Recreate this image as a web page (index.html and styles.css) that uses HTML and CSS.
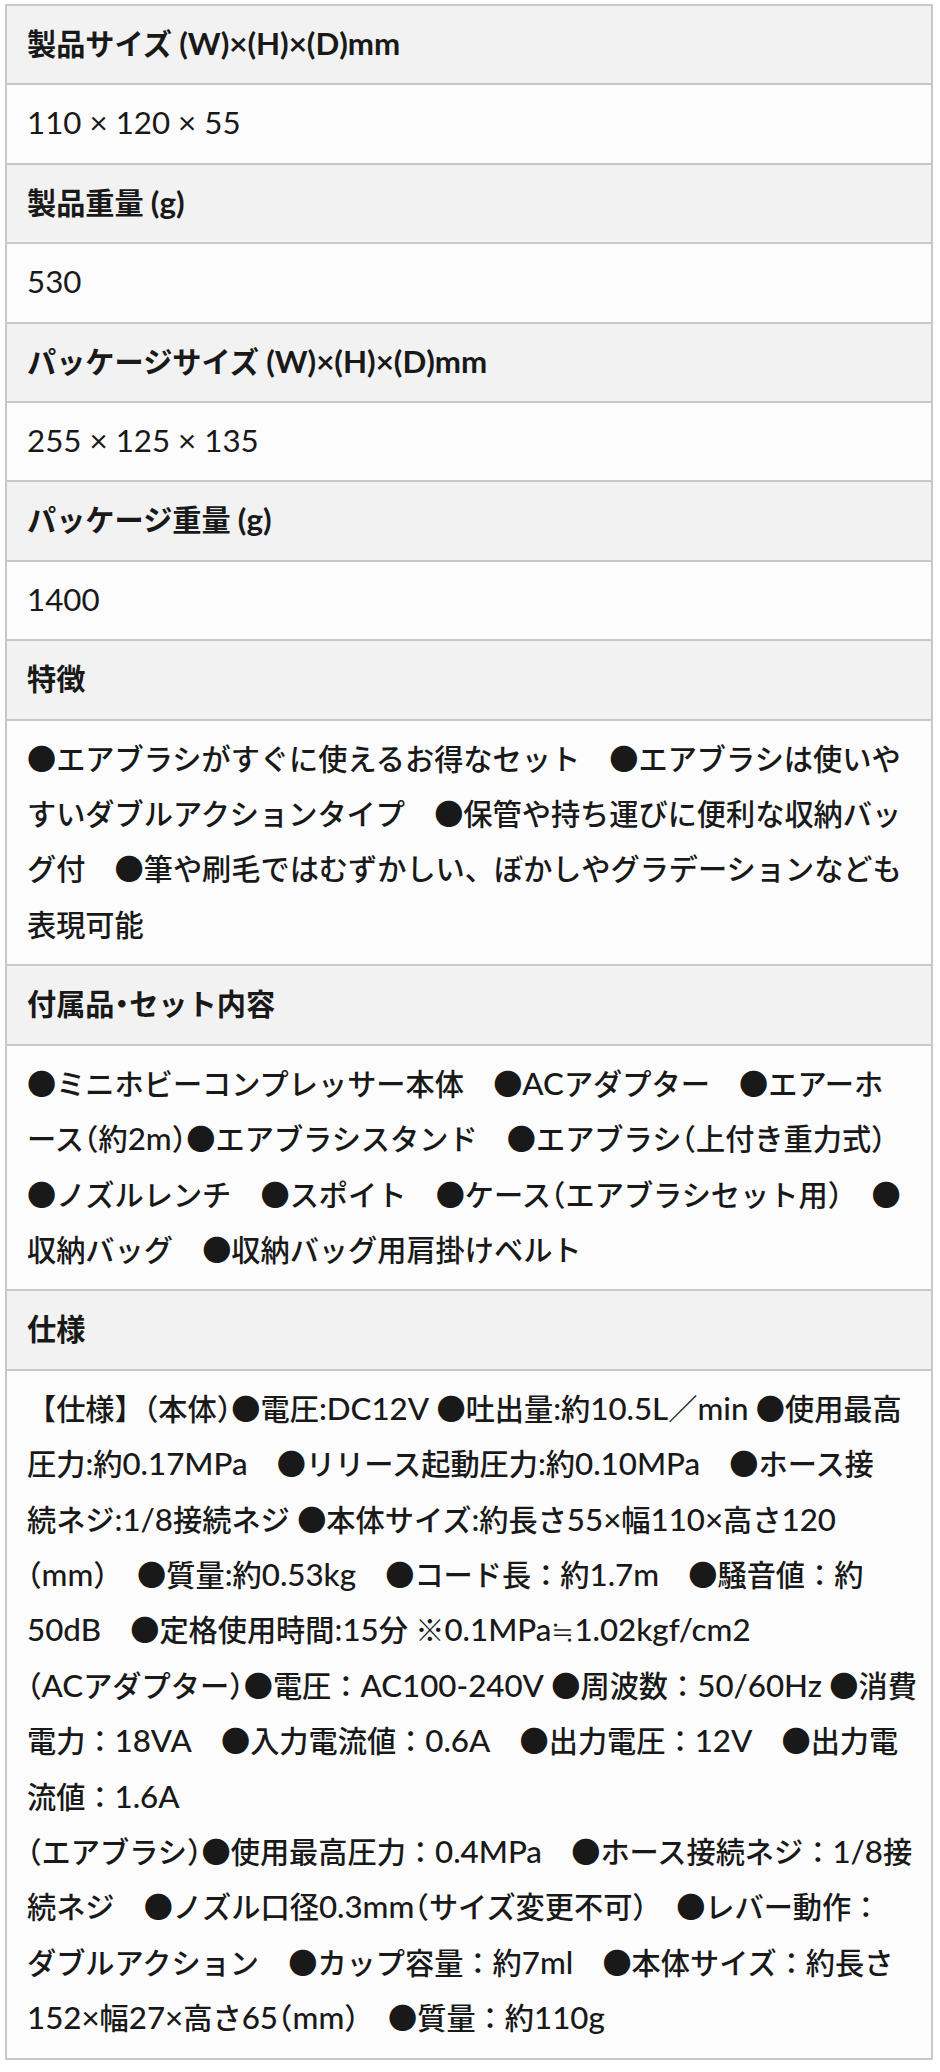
FILE: index.html
```html
<!DOCTYPE html>
<html lang="ja">
<head>
<meta charset="utf-8">
<title>製品仕様</title>
<link rel="stylesheet" href="styles.css">
</head>
<body>
<dl class="spec">
  <dt>製品サイズ <span class="en">(W)×(H)×(D)mm</span></dt>
  <dd class="num">110 × 120 × 55</dd>
  <dt>製品重量 <span class="en">(g)</span></dt>
  <dd class="num">530</dd>
  <dt>パッケージサイズ <span class="en">(W)×(H)×(D)mm</span></dt>
  <dd class="num">255 × 125 × 135</dd>
  <dt>パッケージ重量 <span class="en">(g)</span></dt>
  <dd class="num">1400</dd>
  <dt>特徴</dt>
  <dd class="text"><span class="b">●</span>エアブラシがすぐに使えるお得なセット　<span class="b">●</span>エアブラシは使いや<br>すいダブルアクションタイプ　<span class="b">●</span>保管や持ち運びに便利な収納バッ<br>グ付　<span class="b">●</span>筆や刷毛ではむずかしい、ぼかしやグラデーションなども<br>表現可能</dd>
  <dt>付属品<span class="p">・</span>セット内容</dt>
  <dd class="text"><span class="b">●</span>ミニホビーコンプレッサー本体　<span class="b">●</span><span class="en">AC</span>アダプター　<span class="b">●</span>エアーホ<br>ース<span class="p">（</span>約<span class="en">2m</span><span class="p">）</span><span class="b">●</span>エアブラシスタンド　<span class="b">●</span>エアブラシ<span class="p">（</span>上付き重力式<span class="p">）</span><br><span class="b">●</span>ノズルレンチ　<span class="b">●</span>スポイト　<span class="b">●</span>ケース<span class="p">（</span>エアブラシセット用<span class="p">）</span>　<span class="b">●</span><br>収納バッグ　<span class="b">●</span>収納バッグ用肩掛けベルト</dd>
  <dt>仕様</dt>
  <dd class="text">【仕様】<span class="p">（</span>本体<span class="p">）</span><span class="b">●</span>電圧<span class="en">:DC12V</span> <span class="b">●</span>吐出量<span class="en">:</span>約<span class="en">10.5L</span>／<span class="en">min</span> <span class="b">●</span>使用最高<br>圧力<span class="en">:</span>約<span class="en">0.17MPa</span>　<span class="b">●</span>リリース起動圧力<span class="en">:</span>約<span class="en">0.10MPa</span>　<span class="b">●</span>ホース接<br>続ネジ<span class="en">:1/8</span>接続ネジ <span class="b">●</span>本体サイズ<span class="en">:</span>約長さ<span class="en">55×</span>幅<span class="en">110×</span>高さ<span class="en">120</span><br><span class="p">（</span><span class="en">mm</span><span class="p">）</span>　<span class="b">●</span>質量<span class="en">:</span>約<span class="en">0.53kg</span>　<span class="b">●</span>コード長：約<span class="en">1.7m</span>　<span class="b">●</span>騒音値：約<br><span class="en">50dB</span>　<span class="b">●</span>定格使用時間<span class="en">:15</span>分 ※<span class="en">0.1MPa</span>≒<span class="en">1.02kgf/cm2</span><br><span class="p">（</span><span class="en">AC</span>アダプター<span class="p">）</span><span class="b">●</span>電圧：<span class="en">AC100-240V</span> <span class="b">●</span>周波数：<span class="en">50/60Hz</span> <span class="b">●</span>消費<br>電力：<span class="en">18VA</span>　<span class="b">●</span>入力電流値：<span class="en">0.6A</span>　<span class="b">●</span>出力電圧：<span class="en">12V</span>　<span class="b">●</span>出力電<br>流値：<span class="en">1.6A</span><br><span class="p">（</span>エアブラシ<span class="p">）</span><span class="b">●</span>使用最高圧力：<span class="en">0.4MPa</span>　<span class="b">●</span>ホース接続ネジ：<span class="en">1/8</span>接<br>続ネジ　<span class="b">●</span>ノズル口径<span class="en">0.3mm</span><span class="p">（</span>サイズ変更不可<span class="p">）</span>　<span class="b">●</span>レバー動作：<br>ダブルアクション　<span class="b">●</span>カップ容量：約<span class="en">7ml</span>　<span class="b">●</span>本体サイズ：約長さ<br><span class="en">152×</span>幅<span class="en">27×</span>高さ<span class="en">65</span><span class="p">（</span><span class="en">mm</span><span class="p">）</span>　<span class="b">●</span>質量：約<span class="en">110g</span></dd>
</dl>
</body>
</html>
```
FILE: styles.css
```css
html, body {
  margin: 0;
  padding: 0;
  background: #ffffff;
}

body {
  font-family: Lato, "Noto Sans CJK JP", sans-serif;
  color: #191919;
}

.spec {
  box-sizing: border-box;
  margin: 4px 0 0 5px;
  width: 928px;
  border: 2px solid #c8c8c8;
  border-bottom: 0;
  font-size: 29.2px;
  line-height: 55.4px;
  text-spacing-trim: space-all;
}

.spec dt,
.spec dd {
  margin: 0;
  padding: 10px 20px 12px;
  border-bottom: 2px solid #c8c8c8;
}

.spec dt {
  background: #f2f2f2;
  font-weight: 700;
}

.spec dd {
  background: #fcfcfc;
  font-weight: 500;
}

.spec dd.num {
  font-size: 31.3px;
  font-weight: 400;
}

.spec dd.text {
  white-space: nowrap;
}

.spec .en {
  font-size: 1.072em;
  line-height: 1;
}

.spec .b {
  font-family: "Noto Sans CJK JP", sans-serif;
  line-height: 1;
}

.spec .p {
  font-family: "Noto Sans CJK JP", sans-serif;
  font-feature-settings: "halt" 1;
  line-height: 1;
}
```
